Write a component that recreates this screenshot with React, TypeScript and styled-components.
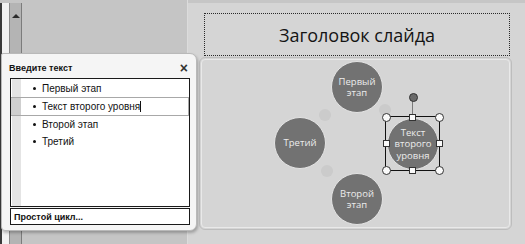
import styled, { createGlobalStyle } from 'styled-components'

const GlobalStyle = createGlobalStyle`
  html, body {
    margin: 0;
    padding: 0;
    overflow: hidden;
  }
  body {
    font-family: "Liberation Sans", Arial, sans-serif;
  }
`

type NodeData = { x: number; y: number; lines: string[] }

const nodes: NodeData[] = [
  { x: 157, y: 29, lines: ['Первый', 'этап'] },
  { x: 100, y: 85, lines: ['Третий'] },
  { x: 157, y: 141, lines: ['Второй', 'этап'] },
  { x: 213, y: 86, lines: ['Текст', 'второго', 'уровня'] },
]

const connectors = [
  { x: 125, y: 57 },
  { x: 127, y: 113 },
  { x: 185, y: 52 },
]

const items = ['Первый этап', 'Текст второго уровня', 'Второй этап', 'Третий']

function App() {
  return (
    <Screen>
      <GlobalStyle />
      <Sidebar>
        <ThumbStrip>
          <ScrollTrack>
            <ScrollArrow />
          </ScrollTrack>
        </ThumbStrip>
      </Sidebar>

      <SlideArea>
        <TitlePlaceholder>Заголовок слайда</TitlePlaceholder>
        <DiagramFrame>
          {connectors.map((c, i) => (
            <Connector key={i} $x={c.x} $y={c.y} />
          ))}
          {nodes.map((n, i) => (
            <Node key={i} $x={n.x} $y={n.y}>
              {n.lines.map((l) => (
                <span key={l}>{l}</span>
              ))}
            </Node>
          ))}
          <SelectionBox>
            <RotateStem />
            <RotateHandle />
            <Handle $round $x={0} $y={0} />
            <Handle $x={50} $y={0} />
            <Handle $round $x={100} $y={0} />
            <Handle $x={0} $y={50} />
            <Handle $x={100} $y={50} />
            <Handle $round $x={0} $y={100} />
            <Handle $x={50} $y={100} />
            <Handle $round $x={100} $y={100} />
          </SelectionBox>
        </DiagramFrame>
      </SlideArea>

      <TextPane>
        <PaneHeader>
          <PaneTitle>Введите текст</PaneTitle>
          <CloseButton>×</CloseButton>
        </PaneHeader>
        <ItemList>
          {items.map((t, i) => (
            <Item key={t} $active={i === 1}>
              <Bullet />
              <span>{t}</span>
              {i === 1 && <Caret />}
            </Item>
          ))}
        </ItemList>
        <PaneFooter>Простой цикл...</PaneFooter>
      </TextPane>
    </Screen>
  )
}

const Screen = styled.div`
  position: relative;
  width: 525px;
  height: 244px;
  display: flex;
  background: #c6c6c6;
  overflow: hidden;
`

const Sidebar = styled.div`
  width: 188px;
  flex-shrink: 0;
  padding-top: 3px;
  display: flex;
  background: #c5c5c5;
  border-right: 1px solid #dcdcdc;
  box-sizing: border-box;
`

const ThumbStrip = styled.div`
  width: 22px;
  display: flex;
  justify-content: flex-end;
  background: #f2f2f2;
  border-left: 2px solid #3a3a3a;
  border-right: 1px solid #7c7c7c;
  box-sizing: border-box;
`

const ScrollTrack = styled.div`
  width: 11px;
  background: #b4b4b4;
  border-left: 1px solid #8a8a8a;
  display: flex;
  justify-content: center;
  padding-top: 11px;
`

const ScrollArrow = styled.div`
  width: 0;
  height: 0;
  border-left: 4px solid transparent;
  border-right: 4px solid transparent;
  border-bottom: 4px solid #2c2c2c;
`

const SlideArea = styled.div`
  flex: 1;
  margin-top: 3px;
  padding: 10px 0 0 11px;
  display: flex;
  flex-direction: column;
  background: #d5d5d5;
`

const TitlePlaceholder = styled.div`
  width: 306px;
  height: 43px;
  margin-left: 5px;
  box-sizing: border-box;
  border: 1px dotted #2a2a2a;
  display: flex;
  align-items: center;
  justify-content: center;
  font-family: "Open Sans", "Noto Sans", sans-serif;
  font-size: 18px;
  color: #141414;
`

const DiagramFrame = styled.div`
  position: relative;
  width: 313px;
  height: 173px;
  margin-top: 1px;
  box-sizing: border-box;
  border: 1px solid #bdbdbd;
  outline: 1px solid #e9e9e9;
  outline-offset: -3px;
  border-radius: 6px;
`

const Node = styled.div<{ $x: number; $y: number }>`
  position: absolute;
  left: ${(p) => p.$x - 26}px;
  top: ${(p) => p.$y - 26}px;
  width: 52px;
  height: 52px;
  border-radius: 50%;
  box-sizing: border-box;
  background: #727272;
  border: 1.5px solid #e4e4e4;
  display: flex;
  flex-direction: column;
  align-items: center;
  justify-content: center;
  color: #ececec;
  font-family: "Open Sans", "Noto Sans", sans-serif;
  font-size: 9.5px;
  line-height: 11.5px;
`

const Connector = styled.div<{ $x: number; $y: number }>`
  position: absolute;
  left: ${(p) => p.$x - 6}px;
  top: ${(p) => p.$y - 6}px;
  width: 12px;
  height: 12px;
  border-radius: 50%;
  background: #cbcbcb;
`

const SelectionBox = styled.div`
  position: absolute;
  left: 185px;
  top: 58px;
  width: 55px;
  height: 55px;
  box-sizing: border-box;
  border: 1px solid #111;
`

const RotateStem = styled.div`
  position: absolute;
  left: 26px;
  top: -17px;
  width: 1px;
  height: 17px;
  background: #7a7a7a;
`

const RotateHandle = styled.div`
  position: absolute;
  left: 23px;
  top: -24px;
  width: 7px;
  height: 7px;
  border-radius: 50%;
  background: #6a6a6a;
  border: 1px solid #333;
`

const Handle = styled.div<{ $x: number; $y: number; $round?: boolean }>`
  position: absolute;
  left: calc(${(p) => p.$x}% - ${(p) => (p.$round ? 4.5 : 3.5)}px);
  top: calc(${(p) => p.$y}% - ${(p) => (p.$round ? 4.5 : 3.5)}px);
  width: ${(p) => (p.$round ? 7 : 5)}px;
  height: ${(p) => (p.$round ? 7 : 5)}px;
  border-radius: ${(p) => (p.$round ? '50%' : '0')};
  background: #fafafa;
  border: 1px solid #333;
`

const TextPane = styled.div`
  position: absolute;
  left: 1px;
  top: 53px;
  width: 196px;
  height: 178px;
  box-sizing: border-box;
  padding: 5px 6px 0 8px;
  display: flex;
  flex-direction: column;
  background: #f5f5f5;
  border: 1px solid #b9b9b9;
  border-radius: 2px 7px 7px 4px;
  box-shadow: 1px 2px 3px rgba(0, 0, 0, 0.25);
`

const PaneHeader = styled.div`
  height: 18px;
  display: flex;
  align-items: center;
  justify-content: space-between;
`

const PaneTitle = styled.span`
  margin-left: -1px;
  font-weight: bold;
  font-size: 9px;
  color: #111;
`

const CloseButton = styled.span`
  margin-right: 2px;
  font-size: 14px;
  font-weight: bold;
  line-height: 1;
  color: #333;
`

const ItemList = styled.div`
  height: 129px;
  margin-top: 1px;
  box-sizing: border-box;
  border: 1px solid #1a1a1a;
  background: linear-gradient(to right, #fff 0, #fff 1px, #e4e4e4 1px, #e4e4e4 10px, #fff 10px);
  padding-top: 1px;
  display: flex;
  flex-direction: column;
`

const Item = styled.div<{ $active?: boolean }>`
  height: ${(p) => (p.$active ? 19 : 17)}px;
  margin-left: ${(p) => (p.$active ? 0 : 22)}px;
  padding-left: ${(p) => (p.$active ? 22 : 0)}px;
  display: flex;
  align-items: center;
  gap: 6px;
  box-sizing: border-box;
  font-size: 10px;
  color: #111;
  ${(p) =>
    p.$active &&
    `
    border: 1px solid #a8a8a8;
    border-left: none;
    background: linear-gradient(to right, #cfcfcf 0, #cfcfcf 10px, #fff 10px);
  `}
`

const Bullet = styled.span`
  width: 3px;
  height: 3px;
  border-radius: 50%;
  background: #111;
`

const Caret = styled.span`
  width: 1px;
  height: 11px;
  margin-left: -6px;
  background: #111;
`

const PaneFooter = styled.div`
  height: 17px;
  margin-top: 1px;
  box-sizing: border-box;
  border: 1px solid #1a1a1a;
  background: #fff;
  padding-left: 3px;
  display: flex;
  align-items: center;
  font-size: 9px;
  font-weight: bold;
  color: #111;
`

export default App
